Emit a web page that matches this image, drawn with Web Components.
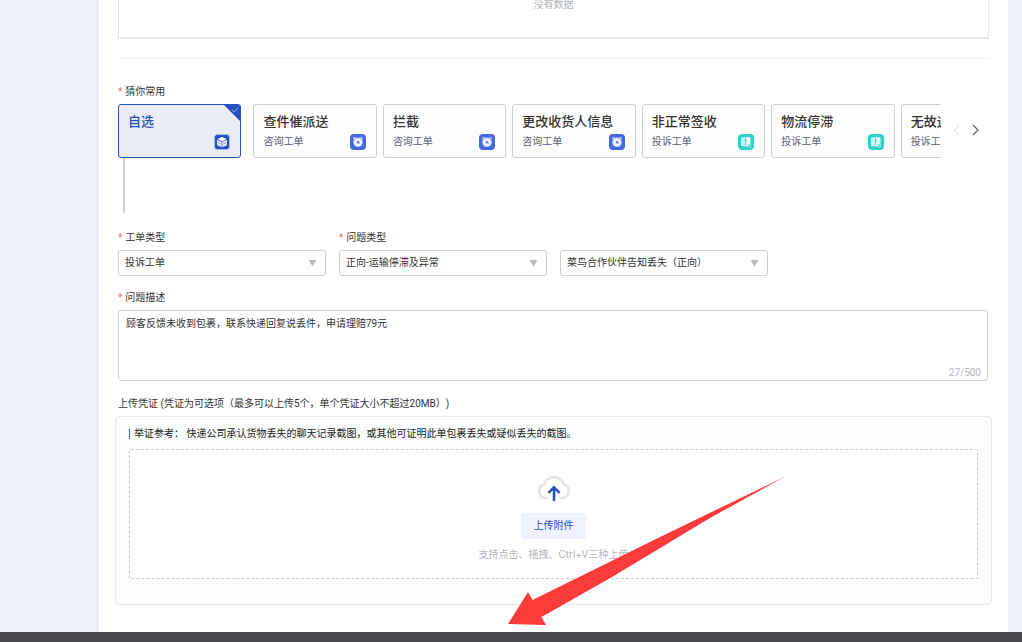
<!DOCTYPE html>
<html lang="zh-CN">
<head>
<meta charset="utf-8">
<title>工单</title>
<style>
html, body { margin: 0; height: 100%; overflow: hidden; }
body { font: 10px/16px Roboto, "Noto Sans CJK SC", sans-serif; color: #333; background: #edf0f9; text-spacing-trim: space-all; }
</style>
</head>
<body>
<ticket-page></ticket-page>
<script>
const define = (name, html, setup) => customElements.define(name, class extends HTMLElement {
  constructor() {
    super();
    const t = document.createElement('template');
    t.innerHTML = html;
    this.attachShadow({ mode: 'open' }).append(t.content.cloneNode(true));
  }
  connectedCallback() { if (setup) setup(this, this.shadowRoot); }
});

define('field-label', `
<style>
:host { display: block; height: 16px; font-size: 10px; line-height: 16px; color: #333; }
i { font-style: normal; color: #f0704f; margin-right: 3px; }
:host([optional]) i { display: none; }
</style>
<i>*</i><slot></slot>`);

define('type-icon', `
<style>
:host { display: block; width: 16px; height: 16px; }
svg { display: none; width: 16px; height: 16px; }
:host([kind=cube]) .cube, :host([kind=clock]) .clock, :host([kind=book]) .book { display: block; }
</style>
<svg class="cube" viewBox="0 0 16 16"><rect x=".5" y=".5" width="15" height="15" rx="3" fill="#264fc1" stroke="#a9b9e8"/><path d="M8 3l4.600 2L8 7.200 3.400 5z" fill="#fff"/><path d="M3 5.700l4.700 2.100v5.400L4 11.800Q3 11.300 3 10.300zM13 5.700L8.300 7.800v5.400L12 11.800q1-.5 1-1.500z" fill="#dfe6fa"/><path d="M4.500 8.700l1.600.8M9.900 9.500l1.600-.8" stroke="#6f89d8" stroke-width=".9"/></svg>
<svg class="clock" viewBox="0 0 16 16"><rect width="16" height="16" rx="4" fill="#4368e0"/><circle cx="4.500" cy="4.300" r="1.500" fill="#a9bbf6"/><circle cx="11.500" cy="4.300" r="1.500" fill="#a9bbf6"/><circle cx="8" cy="8.300" r="4.800" fill="#c9d5ff"/><circle cx="8" cy="8.300" r="3.800" fill="#f1f4ff"/><circle cx="8" cy="8.200" r="1.200" fill="#5b7be6"/><path d="M8 8.300l2 1" stroke="#5b7be6" stroke-width=".8"/></svg>
<svg class="book" viewBox="0 0 16 16"><rect width="16" height="16" rx="4" fill="#2fcfcb"/><path d="M3 3.500L7.700 3v9.500L3 12z" fill="#c6f5f3"/><path d="M7.700 3l4.800.5V12l-4.800.5z" fill="#eafffd"/><path d="M7.700 4.500v4M7.700 9.500v1.300" stroke="#3cc5c1" stroke-width="1.200"/><circle cx="11.300" cy="11.800" r="2" fill="#8eebe7"/><path d="M10.500 11.800l.6.7 1.100-1.300" fill="none" stroke="#2fb9b5" stroke-width=".7"/></svg>`);

define('quick-card', `
<style>
:host { display: block; flex: 0 0 15%; height: 54px; }
button { position: relative; display: grid; grid-template-columns: 1fr 16px; grid-template-rows: 20px 16px; row-gap: 2px; align-items: center; width: 100%; height: 54px; box-sizing: border-box; margin: 0; padding: 7px 10px 7px 9px; border: 1px solid #cfcfd8; border-radius: 3px; background: #fdfdfd; font: inherit; text-align: left; color: #333; overflow: hidden; cursor: pointer; }
b { grid-column: 1 / 3; font-size: 13px; line-height: 20px; font-weight: 500; white-space: nowrap; }
span { color: #5a6078; white-space: nowrap; }
type-icon { grid-column: 2; }
.tick { display: none; position: absolute; top: 0; right: 0; width: 16px; height: 16px; }
:host([selected]) button { border-color: #264fc1; background: #eaecf8; }
:host([selected]) b { color: #264fc1; }
:host([selected]) .tick { display: block; }
</style>
<button type="button"><b><slot></slot></b><span></span><type-icon></type-icon>
<svg class="tick" viewBox="0 0 16 16"><path d="M0 0h16v16z" fill="#264fc1"/><path d="M8 4.500l2.300 2.500L14 3" fill="none" stroke="#9fb3ee"/></svg></button>`,
(el, r) => {
  r.querySelector('span').textContent = el.getAttribute('sub') || '';
  r.querySelector('type-icon').setAttribute('kind', el.getAttribute('icon'));
});

define('quick-list', `
<style>
:host { display: flex; align-items: center; }
.track { flex: 1; min-width: 0; display: flex; column-gap: 6px; overflow: hidden; }
nav { display: flex; flex: 0 0 48px; gap: 6px; padding-left: 9px; box-sizing: border-box; }
button { display: block; width: 13px; height: 16px; padding: 0; border: 0; background: none; color: #666; }
button:disabled { color: #ddd; }
svg { display: block; }
</style>
<div class="track"><slot></slot></div>
<nav><button type="button" disabled aria-label="上一页"><svg width="13" height="16" viewBox="0 0 13 16"><path d="M9 2L4 7l5 5" fill="none" stroke="currentColor"/></svg></button>
<button type="button" aria-label="下一页"><svg width="13" height="16" viewBox="0 0 13 16"><path d="M4 2l5 5-5 5" fill="none" stroke="currentColor" stroke-width="1.200"/></svg></button></nav>`);

define('select-field', `
<style>
:host { display: block; }
div { display: grid; align-items: center; }
select { grid-area: 1 / 1; appearance: none; width: 100%; height: 26px; box-sizing: border-box; margin: 0; padding: 0 24px 0 6px; border: 1px solid #cfcfdb; border-radius: 3px; background: #fff; font: inherit; color: #333; }
svg { grid-area: 1 / 1; justify-self: end; margin-right: 9px; pointer-events: none; }
</style>
<div><select></select><svg width="9" height="7" viewBox="0 0 9 7"><path d="M.5 0h8L4.500 6.500z" fill="#bdbdbf"/></svg></div>`,
(el, r) => {
  const s = r.querySelector('select');
  s.setAttribute('aria-label', el.getAttribute('label'));
  s.replaceChildren(new Option(el.getAttribute('value')));
});

define('text-field', `
<style>
:host { display: grid; }
textarea { grid-area: 1 / 1; display: block; width: 100%; height: 71px; box-sizing: border-box; margin: 0; padding: 5px 7px; border: 1px solid #cfcfdb; border-radius: 3px; background: #fff; font: inherit; color: #333; resize: none; }
span { grid-area: 1 / 1; place-self: end; margin-right: 7px; color: #b5b5bb; }
</style>
<textarea aria-label="问题描述"></textarea><span>27/500</span>`,
(el, r) => { r.querySelector('textarea').value = el.getAttribute('value'); });

define('upload-box', `
<style>
:host { display: block; box-sizing: border-box; height: 189px; padding: 9px 13px; border: 1px solid #e5eae9; border-radius: 4px; background: #fbfdfc; }
p { display: flex; align-items: center; gap: 4px; margin: 0 0 7px; height: 16px; color: #222; }
p::before { content: ""; width: 1px; height: 10px; background: #3e62cf; }
.drop { display: flex; flex-direction: column; align-items: center; height: 130px; box-sizing: border-box; padding-top: 23px; border: 1px dashed #c8cccc; border-radius: 2px; background: #fff; }
svg { display: block; margin-bottom: 10px; }
button { width: 65px; height: 26px; padding: 0; border: 0; border-radius: 3px; background: #eff3ff; font: inherit; color: #264fc1; }
small { margin-top: 7px; font: 10px/16px Inter, "Noto Sans CJK SC", sans-serif; color: #b5b5bb; }
</style>
<p><slot></slot></p>
<div class="drop">
<svg width="36" height="30" viewBox="0 0 36 30"><path d="M11.500 25H9A6.900 6.900 0 0 1 8 11.600A10.200 9.400 0 0 1 28 11.600A6.900 6.900 0 0 1 27 25H24.500" fill="none" stroke="#e4e5ea" stroke-width="2.600"/><path d="M18 28V14.500M12.500 19.800L18 14.300l5.500 5.500" fill="none" stroke="#264fc1" stroke-width="2.500"/></svg>
<button type="button">上传附件</button>
<small>支持点击、拖拽、Ctrl+V三种上传</small></div>`);

define('ticket-page', `
<style>
:host { display: flex; flex-direction: column; height: 100vh; position: relative; overflow: hidden; }
main { flex: 1; min-height: 0; box-sizing: border-box; margin: 0 14px 0 99px; padding: 0 19px; background: #fff; overflow: hidden; }
.empty { height: 39px; box-sizing: border-box; border: 1px solid #e5e5ec; border-top: 0; border-bottom-width: 2px; text-align: center; color: #b5b5bb; line-height: 10px; }
hr { margin: 19px 0 25px; border: 0; border-top: 1px dotted #e2e2e4; }
quick-list { margin-top: 4px; }
.line { width: 2px; height: 55px; margin: 0 0 17px 5px; background: #ced2d9; }
.row { display: grid; grid-template-columns: repeat(3, 208px); column-gap: 13px; align-items: end; margin-bottom: 14px; }
select-field { margin-top: 4px; }
text-field { margin: 4px 1px 15px 0; }
upload-box { margin: 4px -3px 0; }
footer { height: 10px; background: #48474c; }
.arrow { position: absolute; left: 508px; top: 476px; width: 278px; height: 150px; pointer-events: none; }
.first { margin-right: 6px; }
</style>
<main>
<div class="empty">没有数据</div>
<hr>
<field-label>猜你常用</field-label>
<quick-list>
<quick-card selected icon="cube" class="first">自选</quick-card>
<quick-card sub="咨询工单" icon="clock">查件催派送</quick-card>
<quick-card sub="咨询工单" icon="clock">拦截</quick-card>
<quick-card sub="咨询工单" icon="clock">更改收货人信息</quick-card>
<quick-card sub="投诉工单" icon="book">非正常签收</quick-card>
<quick-card sub="投诉工单" icon="book">物流停滞</quick-card>
<quick-card sub="投诉工单" icon="book">无故退回</quick-card>
</quick-list>
<div class="line"></div>
<div class="row">
<div><field-label>工单类型</field-label><select-field label="工单类型" value="投诉工单"></select-field></div>
<div><field-label>问题类型</field-label><select-field label="问题类型" value="正向-运输停滞及异常"></select-field></div>
<select-field label="问题详情" value="菜鸟合作伙伴告知丢失（正向）"></select-field>
</div>
<field-label>问题描述</field-label>
<text-field value="顾客反馈未收到包裹，联系快递回复说丢件，申请理赔79元"></text-field>
<field-label optional>上传凭证 (凭证为可选项（最多可以上传5个，单个凭证大小不超过20MB）)</field-label>
<upload-box>举证参考： 快递公司承认货物丢失的聊天记录截图，或其他可证明此单包裹丢失或疑似丢失的截图。</upload-box>
</main>
<footer></footer>
<svg class="arrow" viewBox="0 0 278 150"><path d="M278 0L202 42 104 101 33.500 141 38 149 0 148 20 116 24.500 124 150 62z" fill="#fc3b3a"/></svg>`);
</script>
</body>
</html>
